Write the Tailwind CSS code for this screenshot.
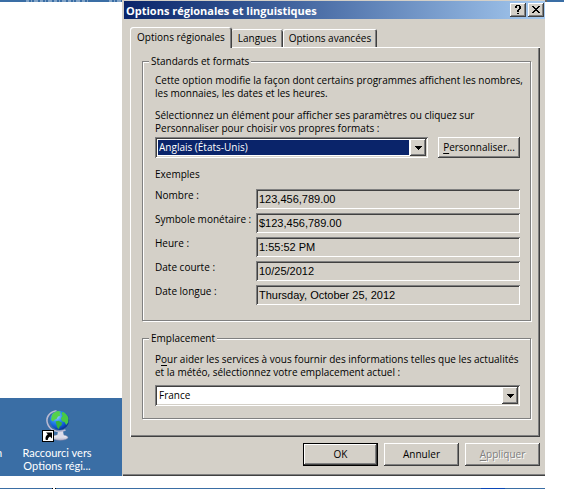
<!DOCTYPE html>
<html lang="fr">
<head>
<meta charset="utf-8">
<title>Options régionales et linguistiques</title>
<meta name="viewport" content="width=device-width, initial-scale=1">
<script src="https://cdn.jsdelivr.net/npm/@tailwindcss/browser@4"></script>
</head>
<body class="bg-white text-[10px] leading-[13px] text-black font-['Open_Sans','Noto_Sans',sans-serif]">
<div class="flex min-h-screen flex-col overflow-hidden">
  <div class="flex">

    <!-- Desktop visible beside the dialog -->
    <aside class="flex w-[122px] shrink-0 flex-col justify-between">
      <div class="h-0.5 bg-[#3a6ea5]" aria-hidden="true">
        <svg class="block h-0.5 w-full" viewBox="0 0 122 2" stroke="#c9d9e8" stroke-dasharray="3 2 1 2 4 2"><path d="M26 1H90M109 1H121"/></svg>
      </div>
      <div class="relative flex h-[78px] flex-col items-center bg-[#3a6ea5] pt-3 pr-2 text-[11px] text-white font-[Lato,'Open_Sans',sans-serif]">
        <svg class="h-8 w-8" viewBox="0 0 32 32" aria-hidden="true">
          <defs>
            <radialGradient id="sea" cx=".35" cy=".3" r=".75"><stop offset="0" stop-color="#a5dcff"/><stop offset=".4" stop-color="#2c8cf0"/><stop offset=".75" stop-color="#0f55cf"/><stop offset="1" stop-color="#0a2c86"/></radialGradient>
            <linearGradient id="foot" x2="0" y2="1"><stop offset="0" stop-color="#fff"/><stop offset="1" stop-color="#b4b4cc"/></linearGradient>
          </defs>
          <ellipse cx="19" cy="27.500" rx="8" ry="2.800" fill="url(#foot)" stroke="#8585a8" stroke-width=".5"/>
          <path d="M17 21h5l1 6h-7z" fill="#dcdcea"/>
          <path d="M15.500.8C8 2 4.500 8 6.500 13.500c2 6.500 10 10 18 6.500" fill="none" stroke="#b9b9d2" stroke-width="1.600"/>
          <circle cx="18.500" cy="10.300" r="9.600" fill="url(#sea)"/>
          <path d="M11 5c1.500-2.500 4-3.800 6.500-4l2.500 1-1.500 2 1 1.500-2.500 1-1.500 2.500-2 .8-1.500 1.800-2-1.500z" fill="#55d24a"/>
          <path d="M14.500 11.500l3-.8 3.500 2-.5 2.500-2 1.500-.5 2.500-2-2-.5-2.800z" fill="#35b53a"/>
          <path d="M21.500 1.700c3 1.200 5.200 3.600 6 6.300l-.3 4.500-2 2.500-1.700-3-2.500-.8-1-3 1.700-2.500-1.200-1.700z" fill="#49c943"/>
          <rect x="1.500" y="20.500" width="11" height="11" fill="#fff" stroke="#000"/>
          <path d="M5 22.500h6v6l-2-2c-1.500.8-2.200 2-2.200 3.500h-2c-.8-2.200 0-4.300 2-5.700z" fill="#000"/>
        </svg>
        <p class="pt-1 text-center">Raccourci vers<br>Options régi...</p>
        <span class="absolute top-12 -left-1">n</span>
      </div>
    </aside>

    <!-- Dialog -->
    <main class="flex min-w-0 flex-1 flex-col bg-[#d4d0c8] pt-px pl-0.5 shadow-[inset_1px_0_0_#d4d0c8,inset_0_-1px_0_#404040,inset_0_-2px_0_#808080]">
      <header class="flex h-[18px] items-center justify-between bg-linear-to-r from-[#0a246a] to-[#a6caf0] pr-px pl-0.5">
        <h1 class="text-[11px] font-bold text-white">Options régionales et linguistiques</h1>
        <div class="flex gap-0.5">
          <button type="button" aria-label="Aide" class="flex h-3.5 w-4 items-center justify-center bg-[#d4d0c8] shadow-[inset_-1px_-1px_0_#404040,inset_1px_1px_0_#fff,inset_-2px_-2px_0_#808080]">
            <svg class="h-3 w-3" viewBox="0 0 12 12" shape-rendering="crispEdges" fill="#000"><path d="M4 1h4v1H4zM3 2h2v2H3zM7 2h2v3H7zM6 5h2v1H6zM5 6h2v2H5zM5 9h2v1H5z"/></svg>
          </button>
          <button type="button" aria-label="Fermer" class="flex h-3.5 w-4 items-center justify-center bg-[#d4d0c8] shadow-[inset_-1px_-1px_0_#404040,inset_1px_1px_0_#fff,inset_-2px_-2px_0_#808080]">
            <svg class="h-3 w-3" viewBox="0 0 12 12" shape-rendering="crispEdges" fill="#000"><path d="M2 2h2v1H2zM8 2h2v1H8zM3 3h2v1H3zM7 3h2v1H7zM4 4h4v1H4zM5 5h2v1H5zM4 6h4v1H4zM3 7h2v1H3zM7 7h2v1H7zM2 8h2v1H2zM8 8h2v1H8z"/></svg>
          </button>
        </div>
      </header>

      <div class="flex flex-col pt-2 pr-[5px] pb-2.5 pl-1.5">
        <div role="tablist" class="z-10 flex items-end">
          <button type="button" role="tab" aria-selected="true" class="-mb-px h-[21px] rounded-t-[3px] bg-[#d4d0c8] px-[7px] shadow-[inset_1px_1px_0_#fff,inset_-1px_0_0_#404040,inset_-2px_0_0_#808080]">Options régionales</button>
          <button type="button" role="tab" aria-selected="false" class="h-[18px] rounded-t-[2px] px-1.5 shadow-[inset_0_1px_0_#fff,inset_-1px_0_0_#404040,inset_-2px_0_0_#808080]">Langues</button>
          <button type="button" role="tab" aria-selected="false" class="h-[18px] rounded-t-[2px] px-1.5 shadow-[inset_1px_1px_0_#fff,inset_-1px_0_0_#404040,inset_-2px_0_0_#808080]">Options avancées</button>
        </div>

        <section role="tabpanel" class="flex flex-col gap-[11px] pt-2 pr-[9px] pb-[18px] pl-3 shadow-[inset_1px_1px_0_#fff,inset_-1px_-1px_0_#404040,inset_-2px_-2px_0_#808080]">
          <fieldset class="h-[266px] min-w-0 border border-[#808080] pr-2.5 pl-3 shadow-[1px_1px_0_#fff,inset_1px_1px_0_#fff]">
            <legend class="-ml-1.5 bg-[#d4d0c8] px-0.5">Standards et formats</legend>
            <p class="pt-1.5 whitespace-nowrap">Cette option modifie la façon dont certains programmes affichent les nombres,<br>les monnaies, les dates et les heures.</p>
            <label for="format" class="block pt-[9px]">Sélectionnez un élément pour afficher ses paramètres ou cliquez sur<br>Personnaliser pour choisir vos propres formats :</label>
            <div class="flex gap-2.5 pt-0.5">
              <div class="relative flex h-[21px] flex-1 bg-white p-[3px] shadow-[inset_1px_1px_0_#808080,inset_-1px_-1px_0_#fff,inset_2px_2px_0_#404040,inset_-2px_-2px_0_#d4d0c8]">
                <select id="format" class="mr-4 h-[15px] min-w-0 flex-1 appearance-none bg-[#0a246a] pl-px text-white"><option>Anglais (États-Unis)</option></select>
                <span class="pointer-events-none absolute top-0.5 right-0.5 flex h-[17px] w-4 items-center justify-center bg-[#d4d0c8] shadow-[inset_-1px_-1px_0_#404040,inset_1px_1px_0_#fff,inset_-2px_-2px_0_#808080]"><svg class="h-1 w-[7px]" viewBox="0 0 7 4" shape-rendering="crispEdges"><path d="M0 0h7v1H6v1H5v1H4v1H3V3H2V2H1V1H0z"/></svg></span>
              </div>
              <button type="button" class="h-[21px] w-[82px] shadow-[inset_-1px_-1px_0_#404040,inset_1px_1px_0_#fff,inset_-2px_-2px_0_#808080]"><span class="underline underline-offset-2">P</span>ersonnaliser...</button>
            </div>
            <h2 class="pt-2.5">Exemples</h2>
            <div class="grid grid-cols-[101px_1fr] gap-y-1 pt-2">
              <label for="nombre">Nombre :</label><input id="nombre" readonly value="123,456,789.00" class="h-5 min-w-0 pl-[3px] text-[11px] font-['Liberation_Sans',Arial,sans-serif] shadow-[inset_1px_1px_0_#808080,inset_-1px_-1px_0_#fff,inset_2px_2px_0_#404040]">
              <label for="monnaie">Symbole monétaire :</label><input id="monnaie" readonly value="$123,456,789.00" class="h-5 min-w-0 pl-[3px] text-[11px] font-['Liberation_Sans',Arial,sans-serif] shadow-[inset_1px_1px_0_#808080,inset_-1px_-1px_0_#fff,inset_2px_2px_0_#404040]">
              <label for="heure">Heure :</label><input id="heure" readonly value="1:55:52 PM" class="h-5 min-w-0 pl-[3px] text-[11px] font-['Liberation_Sans',Arial,sans-serif] shadow-[inset_1px_1px_0_#808080,inset_-1px_-1px_0_#fff,inset_2px_2px_0_#404040]">
              <label for="courte">Date courte :</label><input id="courte" readonly value="10/25/2012" class="h-5 min-w-0 pl-[3px] text-[11px] font-['Liberation_Sans',Arial,sans-serif] shadow-[inset_1px_1px_0_#808080,inset_-1px_-1px_0_#fff,inset_2px_2px_0_#404040]">
              <label for="longue">Date longue :</label><input id="longue" readonly value="Thursday, October 25, 2012" class="h-5 min-w-0 pl-[3px] text-[11px] font-['Liberation_Sans',Arial,sans-serif] shadow-[inset_1px_1px_0_#808080,inset_-1px_-1px_0_#fff,inset_2px_2px_0_#404040]">
            </div>
          </fieldset>

          <fieldset class="h-[87px] min-w-0 border border-[#808080] pr-2.5 pl-3 shadow-[1px_1px_0_#fff,inset_1px_1px_0_#fff]">
            <legend class="-ml-1.5 bg-[#d4d0c8] px-0.5">Emplacement</legend>
            <label for="pays" class="block pt-2 whitespace-nowrap">P<span class="underline underline-offset-2">o</span>ur aider les services à vous fournir des informations telles que les actualités<br>et la météo, sélectionnez votre emplacement actuel :</label>
            <div class="relative mt-1.5 flex h-[21px] bg-white p-[3px] shadow-[inset_1px_1px_0_#808080,inset_-1px_-1px_0_#fff,inset_2px_2px_0_#404040,inset_-2px_-2px_0_#d4d0c8]">
              <select id="pays" class="mr-4 h-[15px] min-w-0 flex-1 appearance-none bg-white pl-px"><option>France</option></select>
              <span class="pointer-events-none absolute top-0.5 right-0.5 flex h-[17px] w-4 items-center justify-center bg-[#d4d0c8] shadow-[inset_-1px_-1px_0_#404040,inset_1px_1px_0_#fff,inset_-2px_-2px_0_#808080]"><svg class="h-1 w-[7px]" viewBox="0 0 7 4" shape-rendering="crispEdges"><path d="M0 0h7v1H6v1H5v1H4v1H3V3H2V2H1V1H0z"/></svg></span>
            </div>
          </fieldset>
        </section>

        <footer class="flex justify-end gap-1.5 pt-1.5">
          <button type="button" class="h-[23px] w-[75px] border border-black shadow-[inset_-1px_-1px_0_#404040,inset_1px_1px_0_#fff,inset_-2px_-2px_0_#808080]">OK</button>
          <button type="button" class="h-[23px] w-[75px] shadow-[inset_-1px_-1px_0_#404040,inset_1px_1px_0_#fff,inset_-2px_-2px_0_#808080]">Annuler</button>
          <button type="button" disabled class="h-[23px] w-[75px] text-[#808080] text-shadow-[1px_1px_0_#fff] shadow-[inset_-1px_-1px_0_#404040,inset_1px_1px_0_#fff,inset_-2px_-2px_0_#808080]"><span class="underline underline-offset-2">A</span>ppliquer</button>
        </footer>
      </div>
    </main>

    <div class="w-[19px] shrink-0"><div class="h-0.5 border-l-2 border-[#666] bg-[#3a6ea5]"></div></div>
  </div>

  <!-- Taskbar edge -->
  <div class="mt-auto mr-[19px] flex h-px justify-between bg-[#3a6ea5]"><span class="ml-[52px] w-1 border-x border-black bg-white"></span><span class="mr-10 w-6 bg-[#0a48b8]"></span></div>
</div>
</body>
</html>
